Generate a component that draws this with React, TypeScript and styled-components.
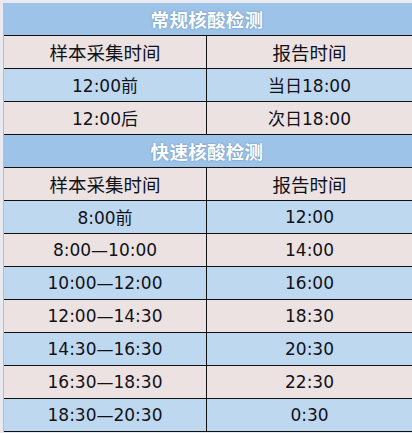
import React from "react";
import styled, { createGlobalStyle } from "styled-components";

const Global = createGlobalStyle`
  html, body { margin: 0; padding: 0; background: #e9eaef; }
  body { font-family: "DejaVu Sans", "Noto Sans CJK SC", sans-serif; }
`;

const Page = styled.div`
  width: 412px;
  height: 433px;
  padding: 3px 0 0 3px;
  box-sizing: border-box;
  background: #e9eaef;
  overflow: hidden;
`;

const Table = styled.div`
  display: flex;
  flex-direction: column;
  border-left: 1px solid #b8bcc6;
`;

const TitleRow = styled.div`
  height: 33px;
  box-sizing: border-box;
  border-bottom: 1px solid #111;
  background: #9dc3e8;
  display: flex;
  align-items: center;
  justify-content: center;
  color: #fff;
  font-family: "Noto Sans CJK SC", sans-serif;
  font-weight: 700;
  font-size: 18.5px;
  letter-spacing: 0.3px;
  text-shadow: 0 0 2px rgba(70, 110, 160, 0.7);
  padding-right: 2px;
`;

const Row = styled.div<{ $tone: "pink" | "blue" }>`
  height: 33px;
  box-sizing: border-box;
  border-bottom: 1px solid #111;
  background: ${(p) => (p.$tone === "blue" ? "#bed8f0" : "#ebe2e1")};
  display: grid;
  grid-template-columns: 203px 1fr;
`;

const Cell = styled.div<{ $divider?: boolean; $head?: boolean }>`
  display: flex;
  align-items: center;
  justify-content: center;
  font-family: ${(p) =>
    p.$head ? `"Noto Sans CJK SC", sans-serif` : `"DejaVu Sans", "Noto Sans CJK SC", sans-serif`};
  font-size: ${(p) => (p.$head ? "18.5px" : "17px")};
  color: #111118;
  border-right: ${(p) => (p.$divider ? "1px solid #111" : "none")};
  padding-bottom: 1px;
`;

type R = [string, string];

const regular: R[] = [
  ["12:00前", "当日18:00"],
  ["12:00后", "次日18:00"],
];

const fast: R[] = [
  ["8:00前", "12:00"],
  ["8:00—10:00", "14:00"],
  ["10:00—12:00", "16:00"],
  ["12:00—14:30", "18:30"],
  ["14:30—16:30", "20:30"],
  ["16:30—18:30", "22:30"],
  ["18:30—20:30", "0:30"],
];

const DataRow = ({ r, tone, head }: { r: R; tone: "pink" | "blue"; head?: boolean }) => (
  <Row $tone={tone}>
    <Cell $divider $head={head}>{r[0]}</Cell>
    <Cell $head={head}>{r[1]}</Cell>
  </Row>
);

export default function App() {
  return (
    <Page>
      <Global />
      <Table>
        <TitleRow>常规核酸检测</TitleRow>
        <DataRow r={["样本采集时间", "报告时间"]} tone="pink" head />
        {regular.map((r, i) => (
          <DataRow key={i} r={r} tone={i % 2 === 0 ? "blue" : "pink"} />
        ))}
        <TitleRow>快速核酸检测</TitleRow>
        <DataRow r={["样本采集时间", "报告时间"]} tone="pink" head />
        {fast.map((r, i) => (
          <DataRow key={i} r={r} tone={i % 2 === 0 ? "blue" : "pink"} />
        ))}
      </Table>
    </Page>
  );
}
